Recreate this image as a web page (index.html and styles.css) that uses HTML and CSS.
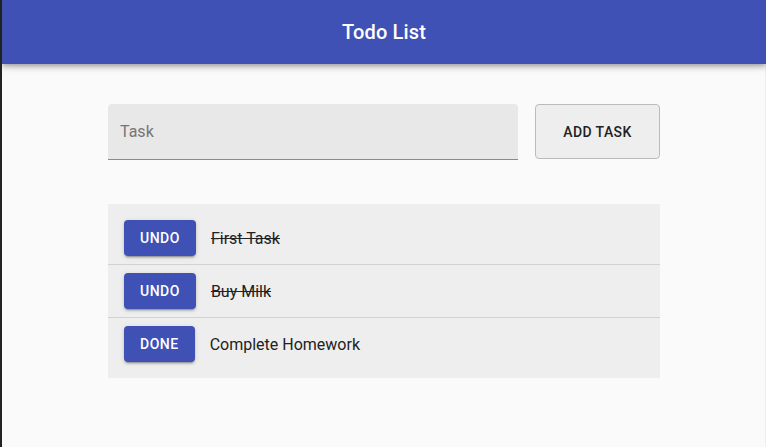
FILE: index.html
```html
<!DOCTYPE html>
<html>
<head>
<meta charset="utf-8">
<link rel="stylesheet" href="styles.css">
</head>
<body>
<div class="app">
  <header class="appbar"><h1 class="title">Todo List</h1></header>
  <main class="content">
    <div class="container">
      <form class="add-form">
        <div class="field"><input class="input" type="text" placeholder="Task"></div>
        <button type="button" class="btn-outline">ADD TASK</button>
      </form>
      <ul class="list">
        <li class="item"><button type="button" class="btn">UNDO</button><span class="label done">First Task</span></li>
        <li class="divider"></li>
        <li class="item"><button type="button" class="btn">UNDO</button><span class="label done">Buy Milk</span></li>
        <li class="divider"></li>
        <li class="item"><button type="button" class="btn">DONE</button><span class="label">Complete Homework</span></li>
      </ul>
    </div>
  </main>
</div>
</body>
</html>
```
FILE: styles.css
```css
html, body { margin: 0; padding: 0; height: 100%; }
body {
  background: #fafafa;
  font-family: Roboto, "Liberation Sans", sans-serif;
  border-left: 2px solid #222;
  box-sizing: border-box;
}
.app { min-height: 100%; display: flex; flex-direction: column; }
.appbar {
  height: 64px;
  background: #3f51b5;
  display: flex;
  align-items: center;
  justify-content: center;
  box-shadow: 0 2px 4px -1px rgba(0,0,0,0.2), 0 4px 5px 0 rgba(0,0,0,0.14), 0 1px 10px 0 rgba(0,0,0,0.12);
  position: relative;
  z-index: 1;
}
.title { margin: 0; color: #fff; font-size: 20px; font-weight: 500; letter-spacing: 0.15px; }
.content { flex: 1; border-right: 1px solid #eee; }
.container { width: 552px; margin: 40px 0 0 106px; }
.add-form { display: flex; align-items: flex-start; gap: 17px; margin: 0; }
.field {
  width: 410px;
  height: 55px;
  background: #e8e8e8;
  border-radius: 4px 4px 0 0;
  border-bottom: 1px solid #8a8a8a;
}
.input {
  width: 100%;
  height: 100%;
  box-sizing: border-box;
  border: 0;
  background: transparent;
  padding: 0 12px;
  font-family: inherit;
  font-size: 16px;
  color: #222;
  outline: none;
}
.input::placeholder { color: #757575; }
.btn-outline {
  width: 125px;
  height: 55px;
  margin: 0;
  background: #eee;
  border: 1px solid #bbb;
  border-radius: 4px;
  font-family: inherit;
  font-size: 14px;
  font-weight: 500;
  letter-spacing: 0.4px;
  color: #222;
  padding: 0;
}
.list {
  list-style: none;
  margin: 44px 0 0;
  padding: 8px 0;
  background: #eee;
}
.item { height: 52px; display: flex; align-items: center; padding: 0 16px; gap: 15px; }
.divider { height: 1px; background: #d2d2d2; }
.btn {
  height: 36px;
  padding: 0 16px;
  background: #3f51b5;
  color: #fff;
  border: 0;
  border-radius: 4px;
  font-family: inherit;
  font-size: 14px;
  font-weight: 500;
  letter-spacing: 0.5px;
  box-shadow: 0 3px 1px -2px rgba(0,0,0,0.2), 0 2px 2px 0 rgba(0,0,0,0.14), 0 1px 5px 0 rgba(0,0,0,0.12);
}
.label { font-size: 16px; color: #222; }
.label.done { text-decoration: line-through; }
```
